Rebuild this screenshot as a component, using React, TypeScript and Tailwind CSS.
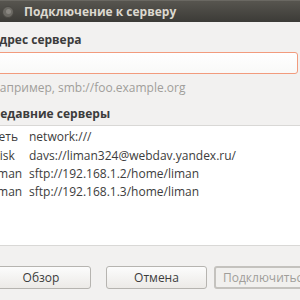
import React from "react";

const recent = [
  { name: "Сеть", uri: "network:///" },
  { name: "Disk", uri: "davs://liman324@webdav.yandex.ru/" },
  { name: "liman", uri: "sftp://192.168.1.2/home/liman" },
  { name: "liman", uri: "sftp://192.168.1.3/home/liman" },
];

export default function App() {
  return (
    <div className="w-[300px] h-[300px] overflow-hidden bg-[#f2f1f0] text-[#3c3c3c] font-['Open_Sans',sans-serif]">
      {/* Title bar */}
      <div className="h-[22px] flex items-center bg-gradient-to-b from-[#57554f] to-[#3c3b37] border-t border-[#6a6862]">
        <div className="ml-[2px] w-[12px] h-[12px] rounded-full bg-[#6c6a64] border border-[#4a4843] flex items-center justify-center">
          <div className="w-[5px] h-[5px] rounded-full bg-[#8a8781]" />
        </div>
        <span className="ml-[10px] text-[12px] font-bold text-[#dcd8cf]">Подключение к серверу</span>
      </div>

      <div className="ml-[-9px] w-[330px]">
        <div className="h-[30px] pt-[8px] text-[12px] font-bold leading-[20px]">Адрес сервера</div>
        <div className="w-[307px] h-[22px] rounded-[3px] border border-[#f29b7d] bg-gradient-to-b from-white to-[#f9f9f8]" />
        <div className="h-[26px] pt-[4px] text-[12px] leading-[20px] text-[#a09e9a]">Например, smb://foo.example.org</div>

        <div className="h-[26px] flex items-end pb-[1px] border-b border-[#d9d8d6]">
          <span className="text-[12px] font-bold leading-[20px]">Недавние серверы</span>
        </div>
        <div className="h-[120px] bg-white border-b border-[#d9d8d6] pt-[2px]">
          {recent.map((r, i) => (
            <div key={i} className="h-[18.4px] flex items-center text-[12px] leading-[18px]">
              <span className="w-[38px] shrink-0 overflow-hidden whitespace-nowrap">{r.name}</span>
              <span className="whitespace-nowrap">{r.uri}</span>
            </div>
          ))}
        </div>

        <div className="flex items-start pt-[20px] text-[12px]">
          <button className="w-[100px] h-[23px] rounded-[3px] border border-[#b6b4b0] bg-gradient-to-b from-[#fcfcfc] to-[#eceae7] text-[#3c3c3c]">Обзор</button>
          <button className="ml-[15px] w-[101px] h-[23px] rounded-[3px] border border-[#b6b4b0] bg-gradient-to-b from-[#fcfcfc] to-[#eceae7] text-[#3c3c3c]">Отмена</button>
          <button className="ml-[7px] w-[101px] h-[23px] rounded-[3px] border-2 border-[#c4c2be] bg-[#f1f0ee] text-[#a09e9a] text-left pl-[7px] whitespace-nowrap overflow-hidden">Подключиться</button>
        </div>
      </div>
    </div>
  );
}
